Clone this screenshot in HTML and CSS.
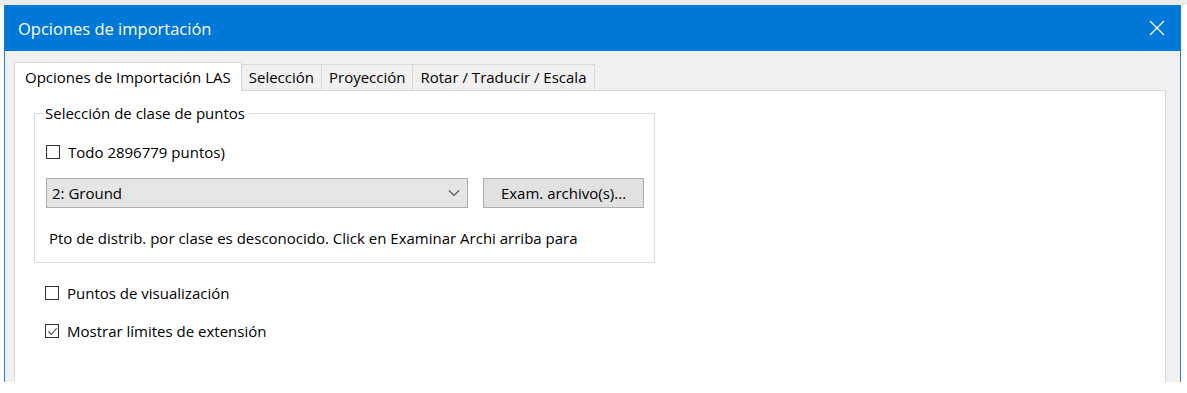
FILE: index.html
```html
<!DOCTYPE html>
<html lang="es">
<head>
    <meta charset="UTF-8">
    <title>Opciones de importación</title>
    <link rel="stylesheet" href="styles.css">
</head>
<body>
<div class="top-strip"></div>
<div class="window">
    <div class="title-bar">
        <span class="title">Opciones de importación</span>
        <svg class="close" width="16" height="16" viewBox="0 0 16 16">
            <path d="M1 1 L15 15 M15 1 L1 15" stroke="#fff" stroke-width="1.3" fill="none"/>
        </svg>
    </div>
    <div class="window-body">
        <ul class="tabs">
            <li class="tab active">Opciones de Importación LAS</li>
            <li class="tab">Selección</li>
            <li class="tab">Proyección</li>
            <li class="tab">Rotar / Traducir / Escala</li>
        </ul>
        <div class="panel">
            <fieldset class="group">
                <legend>Selección de clase de puntos</legend>
                <div class="check-row first">
                    <span class="box"></span>
                    <span>Todo 2896779 puntos)</span>
                </div>
                <div class="select-row">
                    <div class="select">
                        <span>2: Ground</span>
                        <svg width="12" height="8" viewBox="0 0 12 8">
                            <path d="M1 1.5 L6 6.5 L11 1.5" stroke="#555" stroke-width="1.1" fill="none"/>
                        </svg>
                    </div>
                    <div class="button">Exam. archivo(s)...</div>
                </div>
                <div class="info">Pto de distrib. por clase es desconocido. Click en Examinar Archi arriba para</div>
            </fieldset>
            <div class="check-row">
                <span class="box"></span>
                <span>Puntos de visualización</span>
            </div>
            <div class="check-row second">
                <span class="box">
                    <svg width="11" height="11" viewBox="0 0 11 11">
                        <path d="M1.5 5.5 L4.3 8.5 L9.8 2" stroke="#444" stroke-width="1.1" fill="none"/>
                    </svg>
                </span>
                <span>Mostrar límites de extensión</span>
            </div>
        </div>
    </div>
</div>
</body>
</html>
```

FILE: styles.css
```css
* {
    margin: 0;
    padding: 0;
    box-sizing: border-box;
}
body {
    background: #fff;
    font-family: "Open Sans", "Noto Sans", sans-serif;
    font-size: 15px;
    color: #000;
}
.top-strip {
    height: 5px;
    background: #ececec;
}
.window {
    margin-left: 4px;
    width: 1177px;
    height: 377px;
    border-left: 1px solid #1a82d6;
    border-right: 1px solid #1a82d6;
    display: flex;
    flex-direction: column;
}
.title-bar {
    height: 46px;
    background: #0078d7;
    color: #fff;
    display: flex;
    align-items: center;
    justify-content: space-between;
    padding: 0 15px 0 13px;
}
.title {
    font-size: 16.5px;
}
.close {
    display: block;
}
.window-body {
    flex: 1;
    background: #f0f0f0;
    padding: 11px 14px 0 9px;
    display: flex;
    flex-direction: column;
}
.tabs {
    list-style: none;
    display: flex;
    align-items: flex-end;
    height: 28px;
}
.tab {
    height: 26px;
    padding: 0 7px;
    background: #f0f0f0;
    border: 1px solid #d9d9d9;
    border-left: none;
    border-bottom: none;
    line-height: 24px;
    white-space: nowrap;
}
.tab.active {
    height: 29px;
    margin-bottom: -1px;
    padding: 0 10px;
    background: #fff;
    border-left: 1px solid #d9d9d9;
    line-height: 28px;
    position: relative;
    z-index: 1;
}
.panel {
    flex: 1;
    background: #fff;
    border: 1px solid #d9d9d9;
    border-bottom: none;
    padding: 13px 0 0 19px;
}
.group {
    width: 621px;
    height: 159px;
    border: 1px solid #dcdcdc;
    padding: 0 0 0 11px;
}
.group legend {
    margin-left: -3px;
    padding: 0 2px;
    line-height: 18px;
}
.check-row {
    display: flex;
    align-items: center;
    height: 20px;
    margin-top: 20px;
}
.check-row.first {
    margin-top: 20px;
}
.check-row.second {
    margin-top: 18px;
}
.box {
    width: 14px;
    height: 14px;
    border: 1px solid #333;
    margin-right: 8px;
    display: flex;
    align-items: center;
    justify-content: center;
    background: #fff;
}
.select-row {
    display: flex;
    align-items: center;
    margin-top: 16px;
}
.select {
    width: 422px;
    height: 30px;
    background: #e5e5e5;
    border: 1px solid #adadad;
    display: flex;
    align-items: center;
    justify-content: space-between;
    padding: 0 7px 0 5px;
}
.select svg {
    display: block;
}
.button {
    margin-left: 15px;
    width: 161px;
    height: 30px;
    background: #e1e1e1;
    border: 1px solid #adadad;
    display: flex;
    align-items: center;
    justify-content: center;
}
.info {
    margin-top: 20px;
    padding-left: 3px;
}
.panel > .check-row {
    margin-left: 11px;
}
```
